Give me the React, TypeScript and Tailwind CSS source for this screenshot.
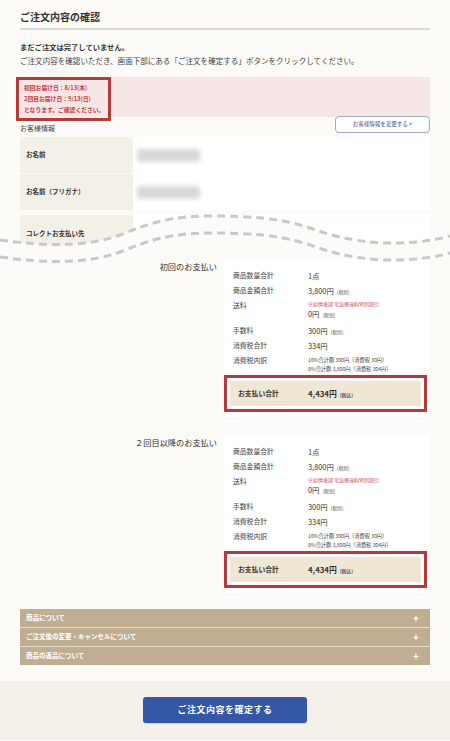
import React from 'react';

const Row = ({ label, h, children }: { label: string; h: string; children: React.ReactNode }) => (
  <div className={`flex pl-[10px] ${h}`}>
    <div className="w-[75px] shrink-0 text-[6.8px] leading-[15px] text-[#444]">{label}</div>
    <div className="flex-1 text-[7.4px] leading-[15px] text-[#333]">{children}</div>
  </div>
);

const Small = ({ children }: { children: React.ReactNode }) => (
  <span className="ml-[3px] text-[4.8px] text-[#555]">{children}</span>
);

const PaymentCard = ({ title, className }: { title: string; className?: string }) => (
  <div className={`flex ${className ?? ''}`}>
    <div className="w-[203px] shrink-0 pr-[6px] text-right text-[8.2px] leading-[14px] text-[#333]">{title}</div>
    <div className="w-[207px] bg-white pt-[9px] pb-[6px] shadow-[0_0_2px_rgba(0,0,0,0.04)]">
      <Row label="商品数量合計" h="h-[15px]">1点</Row>
      <Row label="商品金額合計" h="h-[15px]">
        3,800円<Small>(税別)</Small>
      </Row>
      <Row label="送料" h="h-[25px]">
        <div className="pt-[1px] text-[5px] leading-[10px] text-[#c7434a]">※如供楽部 宅急便送料特別割引</div>
        <div className="leading-[10px]">
          0円<Small>(税別)</Small>
        </div>
      </Row>
      <Row label="手数料" h="h-[15px]">
        300円<Small>(税別)</Small>
      </Row>
      <Row label="消費税合計" h="h-[15px]">334円</Row>
      <Row label="消費税内訳" h="h-[20px]">
        <div className="pt-[1.5px] text-[5.2px] leading-[9px] text-[#444]">
          <div>10%合計額 300円（消費税 30円）</div>
          <div>8%合計額 3,800円（消費税 304円）</div>
        </div>
      </Row>
      <div className="mt-[2px] ml-[1px] mr-[3px] border-[3px] border-[#b8393a] bg-white p-[3px]">
        <div className="flex h-[25px] items-center bg-[#efe7d4] pl-[8px]">
          <div className="w-[70px] text-[6.8px] font-bold text-[#333]">お支払い合計</div>
          <div className="text-[7.8px] font-bold text-[#333]">
            4,434円<Small>(税込)</Small>
          </div>
        </div>
      </div>
    </div>
  </div>
);

const WAVE = 'M0 34 C 50 41, 90 40, 120 29 C 150 17, 170 10, 210 10 C 250 10, 280 12, 310 22 C 340 33, 370 38, 400 37 C 425 36, 440 33, 450 30';

export default function App() {
  return (
    <div className="min-h-[741px] w-[450px] bg-[#fcfbf8] font-['Noto_Sans_CJK_JP',sans-serif] text-[#333]">
      <div className="px-5 pt-[9px]">
        <h1 className="border-b-2 border-[#dcd9d2] pb-[4px] text-[10px] font-bold leading-[15px] text-[#333]">ご注文内容の確認</h1>

        <p className="mt-[10px] text-[7.3px] font-bold leading-[14px]">まだご注文は完了していません。</p>
        <p className="text-[7.55px] leading-[14px] text-[#444]">
          ご注文内容を確認いただき、画面下部にある「ご注文を確定する」ボタンをクリックしてください。
        </p>

        <div className="mt-[9px] h-[40px] bg-[#f6e6e6]">
          <div className="relative -ml-[4px] w-[95px] border-[3px] border-[#b8393a] pt-[3px] pb-[3px] pl-[5px] text-[5.8px] font-bold leading-[10.8px] text-[#c33c3c]">
            <div>初回お届け日：8/13(木)</div>
            <div>2回目お届け日：9/13(日)</div>
            <div>となります。ご確認ください。</div>
          </div>
        </div>

        <div className="flex h-[16px] items-end justify-between">
          <span className="text-[7px] leading-[10px] text-[#444]">お客様情報</span>
          <button className="relative z-10 flex h-[17px] w-[95px] items-center justify-center rounded-[4px] border border-[#9eabc8] bg-white text-[5.5px] text-[#3a4f8a]">
            お客様情報を変更する &gt;
          </button>
        </div>

        <div className="relative mt-[4px]">
          <div className="flex h-[36px] bg-white">
            <div className="flex w-[113px] items-center bg-[#f3f0e7] pl-[6px] text-[6.5px] font-bold">お名前</div>
            <div className="flex items-center pl-[4px]">
              <div className="h-[13px] w-[63px] rounded-[3px] bg-[#d9d9d9] blur-[2px]" />
            </div>
          </div>
          <div className="mt-[1px] flex h-[36px] bg-white">
            <div className="flex w-[113px] items-center bg-[#f3f0e7] pl-[6px] text-[6.5px] font-bold">お名前（フリガナ）</div>
            <div className="flex items-center pl-[4px]">
              <div className="h-[13px] w-[63px] rounded-[3px] bg-[#d9d9d9] blur-[2px]" />
            </div>
          </div>
          <div className="mt-[5px] flex h-[38px] bg-white">
            <div className="flex w-[113px] items-center bg-[#f3f0e7] pl-[6px] text-[6.5px] font-bold">コレクトお支払い先</div>
          </div>

          <svg className="absolute top-[69px] -left-5 overflow-visible" width="450" height="52" viewBox="0 0 450 52">
            <path d={`${WAVE} L450 52 L0 52 Z`} fill="#fcfbf8" />
            <path d={WAVE} fill="none" stroke="#c9c9c9" strokeWidth="3" strokeDasharray="8 5" />
            <path d={WAVE} transform="translate(0 17)" fill="none" stroke="#c9c9c9" strokeWidth="3" strokeDasharray="8 5" />
          </svg>
        </div>

        <PaymentCard title="初回のお支払い" className="mt-[6px]" />
        <PaymentCard title="２回目以降のお支払い" className="mt-[17px]" />

        <div className="mt-[15px] flex flex-col gap-[1px] bg-[#e4dccd]">
          {['商品について', 'ご注文後の変更・キャンセルについて', '商品の返品について'].map((t) => (
            <div key={t} className="flex h-[18px] items-center justify-between bg-[#bfae92] pl-[6px] pr-[11px] text-white">
              <span className="text-[6.5px] font-bold">{t}</span>
              <span className="text-[10px] font-bold leading-none">+</span>
            </div>
          ))}
        </div>
      </div>

      <div className="mt-[16px] flex h-[59px] justify-center bg-[#f3f1ea] pt-[16px]">
        <button className="h-[26px] w-[164px] rounded-[3px] bg-[#3457a6] text-[9px] font-bold tracking-[0.5px] text-white shadow-[0_1px_1px_rgba(0,0,0,0.15)]">
          ご注文内容を確定する
        </button>
      </div>
    </div>
  );
}
